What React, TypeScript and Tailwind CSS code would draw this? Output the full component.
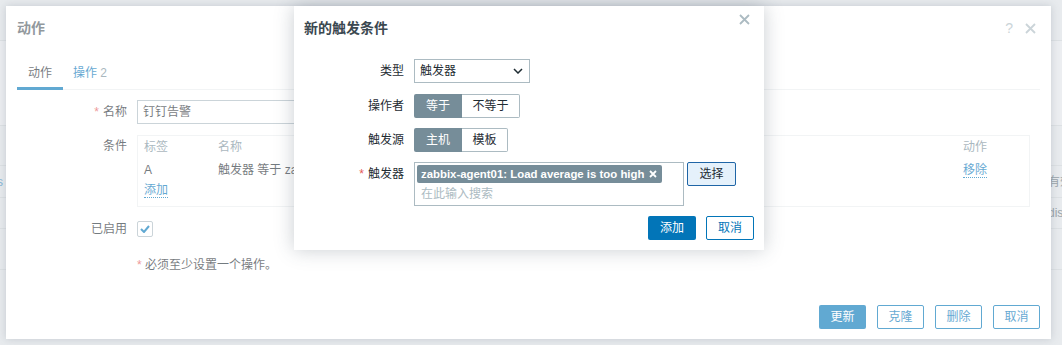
import React from "react";

function CloseIcon({ className = "" }: { className?: string }) {
  return (
    <svg width="11" height="11" viewBox="0 0 11 11" className={className}>
      <path d="M1 1L10 10M10 1L1 10" stroke="currentColor" strokeWidth="1.8" />
    </svg>
  );
}

function OutlineBtn({ children }: { children: React.ReactNode }) {
  return (
    <button className="h-[24px] w-[47px] border border-[#0275b8] bg-white text-[#0275b8] rounded-[2px] text-[12px] leading-none">
      {children}
    </button>
  );
}

// 背景页面（被遮挡的部分）
function BackgroundPage() {
  return (
    <div className="flex flex-col text-[12px]">
      <div className="h-[41px] border-b border-[#dde1e4]" />
      <div className="h-[85px] border-b border-[#dde1e4] bg-[#eceef1]" />
      <div className="h-[40px] border-b border-[#dde1e4]" />
      <div className="h-[32px] border-b border-[#dde1e4] flex items-center justify-between">
        <span className="-ml-[3px] text-[#8ab7d6]">s</span>
        <span className="w-[14px] text-[#9aa5ab] overflow-hidden whitespace-nowrap">有效</span>
      </div>
      <div className="h-[31px] border-b border-[#dde1e4] flex items-center justify-end">
        <span className="w-[14px] text-[#9aa5ab] overflow-hidden whitespace-nowrap">disabled</span>
      </div>
      <div className="h-[41px] border-b border-[#dde1e4]" />
    </div>
  );
}

function ActionDialog() {
  return (
    <div className="absolute left-[6px] top-[6px] w-[1045px] h-[333px] bg-white shadow-[0_0_8px_rgba(90,105,120,0.25)]">
      <div className="opacity-[0.62] h-full flex flex-col text-[#1f2c33] text-[12px]">
        <div className="h-[44px] flex items-center justify-between px-[11px]">
          <span className="text-[14px] font-bold text-[#4f5a62]">动作</span>
          <div className="flex items-center gap-[12px] text-[#acbbc2] pr-[4px]">
            <span className="text-[14px]">?</span>
            <CloseIcon />
          </div>
        </div>
        <div className="mx-[11px] h-[40px] border-b border-[#ebeef0] flex items-end">
          <div className="px-[11px] pb-[7px] border-b-[3px] border-[#0275b8] -mb-px leading-[14px]">动作</div>
          <div className="px-[10px] pb-[10px] -mb-px leading-[14px] text-[#0275b8]">
            操作 <span className="text-[#768d99]">2</span>
          </div>
        </div>

        <div className="px-[11px] pt-[10px] flex flex-col">
          <div className="flex items-center gap-[10px]">
            <div className="w-[110px] text-right">
              <span className="text-[#e45959] mr-[4px]">*</span>名称
            </div>
            <div className="w-[453px] h-[24px] border border-[#acbbc2] px-[5px] flex items-center">钉钉告警</div>
          </div>

          <div className="flex items-start gap-[10px] mt-[11px]">
            <div className="w-[110px] text-right pt-[4px] leading-[14px]">条件</div>
            <div className="w-[893px] border border-[#ebeef0] px-[6px] pt-[2px] pb-[7px] leading-[18px]">
              <div className="flex h-[18px] text-[#768d99] mb-[5px]">
                <span className="w-[74px]">标签</span>
                <span className="flex-1">名称</span>
                <span className="w-[60px]">动作</span>
              </div>
              <div className="flex h-[18px] mb-[2px]">
                <span className="w-[74px]">A</span>
                <span className="flex-1">触发器 等于 zabbix-agent01: Load average is too high</span>
                <span className="w-[60px]">
                  <span className="text-[#0275b8] border-b border-dotted border-[#0275b8]">移除</span>
                </span>
              </div>
              <div className="h-[18px]">
                <span className="text-[#0275b8] border-b border-dotted border-[#0275b8]">添加</span>
              </div>
            </div>
          </div>

          <div className="flex items-center gap-[10px] mt-[13px]">
            <div className="w-[110px] text-right">已启用</div>
            <div className="w-[16px] h-[16px] border border-[#acbbc2] rounded-[2px] flex items-center justify-center">
              <svg width="10" height="8" viewBox="0 0 10 8">
                <path d="M1 4L4 7L9 1" stroke="#0275b8" strokeWidth="2" fill="none" />
              </svg>
            </div>
          </div>

          <div className="mt-[20px] ml-[120px] leading-[14px]">
            <span className="text-[#e45959]">*</span> 必须至少设置一个操作。
          </div>
        </div>

        <div className="mt-auto flex justify-end gap-[11px] px-[11px] pb-[10px]">
          <button className="h-[24px] w-[47px] bg-[#0275b8] text-white rounded-[2px] text-[12px] leading-none">更新</button>
          <OutlineBtn>克隆</OutlineBtn>
          <OutlineBtn>删除</OutlineBtn>
          <OutlineBtn>取消</OutlineBtn>
        </div>
      </div>
    </div>
  );
}

function ConditionModal() {
  return (
    <div className="absolute left-[294px] top-[6px] w-[470px] h-[244px] bg-white shadow-[0_0_18px_rgba(60,75,90,0.28)] text-[#1f2c33] text-[12px]">
      <div className="h-[44px] flex items-center justify-between pl-[10px] pr-[10px]">
        <span className="text-[14px] font-bold text-[#3b4850]">新的触发条件</span>
        <CloseIcon className="text-[#acbbc2] -mt-[17px] mr-[4px]" />
      </div>

      <div className="flex flex-col pl-[10px] pr-[10px] pt-[9px]">
        <div className="flex items-center gap-[10px]">
          <div className="w-[100px] text-right">类型</div>
          <div className="w-[116px] h-[24px] border border-[#acbbc2] flex items-center justify-between pl-[5px] pr-[6px]">
            <span>触发器</span>
            <svg width="10" height="6" viewBox="0 0 10 6">
              <path d="M1 1L5 5L9 1" stroke="#1f2c33" strokeWidth="1.5" fill="none" />
            </svg>
          </div>
        </div>

        <div className="flex items-center gap-[10px] mt-[11px]">
          <div className="w-[100px] text-right">操作者</div>
          <div className="flex h-[24px]">
            <div className="w-[48px] bg-[#768d99] text-white flex items-center justify-center rounded-l-[2px]">等于</div>
            <div className="w-[58px] border border-l-0 border-[#acbbc2] flex items-center justify-center rounded-r-[2px]">不等于</div>
          </div>
        </div>

        <div className="flex items-center gap-[10px] mt-[10px]">
          <div className="w-[100px] text-right">触发源</div>
          <div className="flex h-[24px]">
            <div className="w-[48px] bg-[#768d99] text-white flex items-center justify-center rounded-l-[2px]">主机</div>
            <div className="w-[46px] border border-l-0 border-[#acbbc2] flex items-center justify-center rounded-r-[2px]">模板</div>
          </div>
        </div>

        <div className="flex items-start gap-[10px] mt-[10px]">
          <div className="w-[100px] text-right pt-[4px] leading-[16px]">
            <span className="text-[#e45959] mr-[4px]">*</span>触发器
          </div>
          <div className="flex items-start gap-[3px]">
            <div className="w-[270px] h-[44px] border border-[#acbbc2] p-[2px]">
              <div className="inline-flex items-center h-[18px] bg-[#768d99] text-white rounded-[2px] pl-[4px] pr-[5px] gap-[5px] text-[11.4px] leading-[18px] font-bold whitespace-nowrap">
                <span>zabbix-agent01: Load average is too high</span>
                <svg width="8" height="8" viewBox="0 0 8 8">
                  <path d="M1 1L7 7M7 1L1 7" stroke="white" strokeWidth="1.8" />
                </svg>
              </div>
              <div className="pl-[4px] pt-[3px] leading-[16px] text-[#acbbc2]">在此输入搜索</div>
            </div>
            <button className="w-[49px] h-[24px] border border-[#1f65a6] bg-[#e5f1fb] rounded-[2px] text-[12px] leading-none">选择</button>
          </div>
        </div>

        <div className="flex justify-end gap-[10px] mt-[10px]">
          <button className="w-[48px] h-[24px] bg-[#0275b8] text-white rounded-[2px] text-[12px] leading-none">添加</button>
          <button className="w-[48px] h-[24px] border border-[#0275b8] text-[#0275b8] bg-white rounded-[2px] text-[12px] leading-none">取消</button>
        </div>
      </div>
    </div>
  );
}

export default function App() {
  return (
    <div className="relative w-[1062px] h-[345px] overflow-hidden bg-[#e8ebee] [font-family:'Liberation_Sans','Noto_Sans_CJK_SC',sans-serif]">
      <BackgroundPage />
      <ActionDialog />
      <ConditionModal />
    </div>
  );
}
